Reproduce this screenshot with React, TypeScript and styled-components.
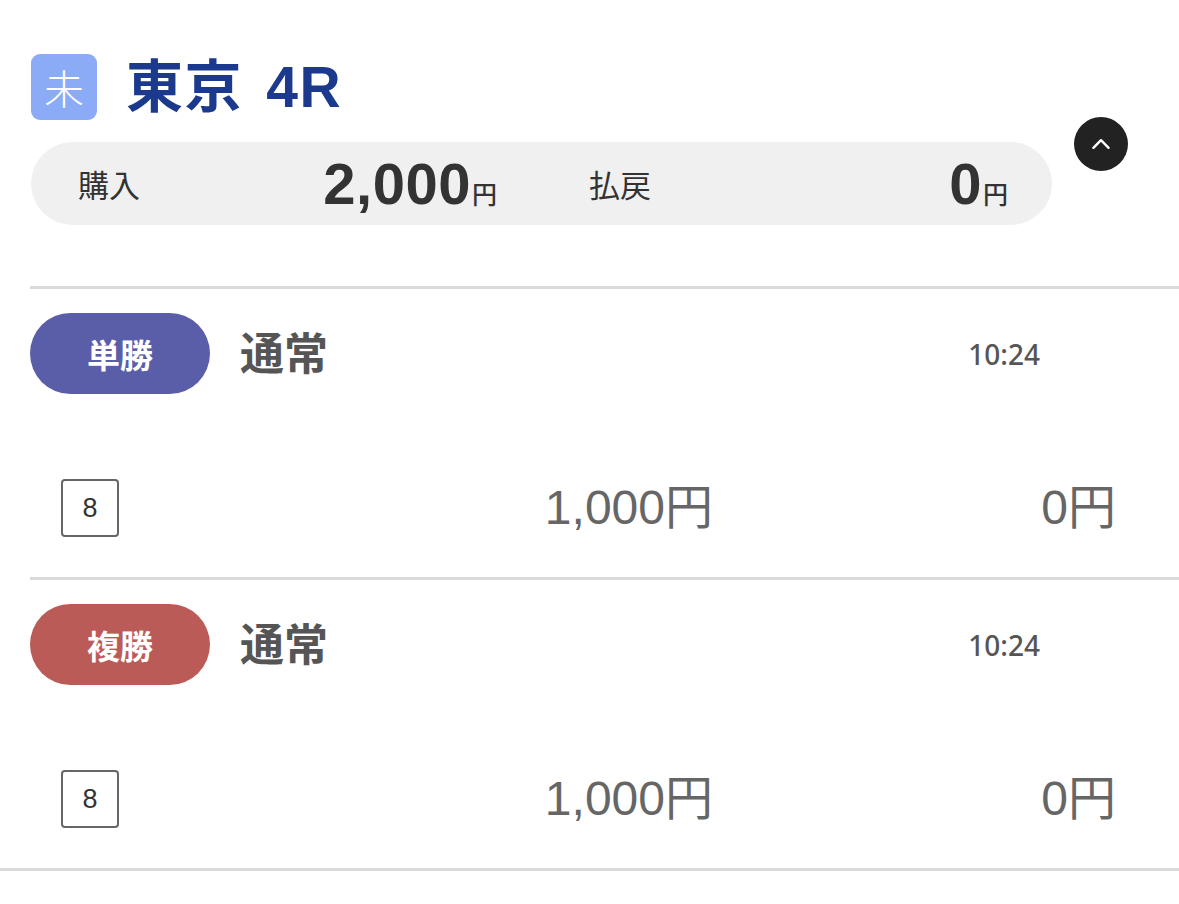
import styled, { createGlobalStyle } from "styled-components";

const GlobalStyle = createGlobalStyle`
  html, body {
    margin: 0;
    padding: 0;
    background: #fff;
  }
  body {
    font-family: "Liberation Sans", "Noto Sans CJK JP", sans-serif;
    color: #333;
  }
`;

type BetKind = "win" | "place";

interface Bet {
  id: number;
  kind: BetKind;
  label: string;
  method: string;
  time: string;
  horse: number;
  amount: string;
  payout: string;
}

const bets: Bet[] = [
  { id: 1, kind: "win", label: "単勝", method: "通常", time: "10:24", horse: 8, amount: "1,000", payout: "0" },
  { id: 2, kind: "place", label: "複勝", method: "通常", time: "10:24", horse: 8, amount: "1,000", payout: "0" },
];

const kindColor: Record<BetKind, string> = {
  win: "#5a5ea9",
  place: "#bb5b58",
};

const App = () => {
  return (
    <Page>
      <GlobalStyle />
      <Header>
        <TitleRow>
          <StatusBadge>未</StatusBadge>
          <Title>東京 4R</Title>
        </TitleRow>
        <Summary>
          <SummaryItem>
            <SummaryLabel>購入</SummaryLabel>
            <SummaryValue>
              2,000<small>円</small>
            </SummaryValue>
          </SummaryItem>
          <SummaryItem>
            <SummaryLabel>払戻</SummaryLabel>
            <SummaryValue>
              0<small>円</small>
            </SummaryValue>
          </SummaryItem>
        </Summary>
        <ToggleButton aria-label="collapse">
          <svg width="26" height="26" viewBox="0 0 24 24" fill="none">
            <path
              d="M5 15.5L12 8.5L19 15.5"
              stroke="#fff"
              strokeWidth="2.2"
              strokeLinecap="round"
              strokeLinejoin="round"
            />
          </svg>
        </ToggleButton>
      </Header>

      <BetList>
        {bets.map((bet) => (
          <BetBlock key={bet.id}>
            <BetHead>
              <KindPill $kind={bet.kind}>{bet.label}</KindPill>
              <Method>{bet.method}</Method>
              <Time>{bet.time}</Time>
            </BetHead>
            <BetLine>
              <HorseCell>
                <HorseNo>{bet.horse}</HorseNo>
              </HorseCell>
              <Money>{bet.amount}円</Money>
              <Money>{bet.payout}円</Money>
            </BetLine>
          </BetBlock>
        ))}
      </BetList>
    </Page>
  );
};

export default App;

const Page = styled.div`
  width: 1179px;
  min-height: 904px;
  background: #fff;
`;

const Header = styled.div`
  display: grid;
  grid-template-columns: 1021px 1fr;
  column-gap: 22px;
  row-gap: 22px;
  padding: 54px 0 0 31px;
`;

const TitleRow = styled.div`
  display: flex;
  align-items: center;
  gap: 29px;
  grid-column: 1;
`;

const StatusBadge = styled.div`
  width: 66px;
  height: 66px;
  border-radius: 9px;
  background: #8cabf7;
  color: #fff;
  display: flex;
  align-items: center;
  justify-content: center;
  font-family: "Noto Sans CJK JP", sans-serif;
  font-weight: 300;
  font-size: 40px;
`;

const Title = styled.h1`
  margin: 0;
  font-size: 57px;
  font-weight: 700;
  color: #1b3a8d;
  letter-spacing: 1.5px;
  word-spacing: 6px;
  line-height: 1;
`;

const Summary = styled.div`
  grid-column: 1;
  height: 83px;
  border-radius: 42px;
  background: #f0f0f0;
  display: grid;
  grid-template-columns: 1fr 1fr;
  column-gap: 92px;
  padding: 0 44px 0 47px;
  box-sizing: border-box;
  align-items: center;
`;

const SummaryItem = styled.div`
  display: flex;
  align-items: center;
  justify-content: space-between;
`;

const SummaryLabel = styled.span`
  font-family: "Noto Sans CJK JP", sans-serif;
  font-size: 31px;
  font-weight: 400;
  color: #333;
  line-height: 1;
`;

const SummaryValue = styled.span`
  font-size: 58px;
  font-weight: 700;
  color: #333;
  letter-spacing: 0.5px;
  line-height: 1;
  small {
    font-family: "Noto Sans CJK JP", sans-serif;
    font-size: 25px;
    font-weight: 500;
    margin-left: 1px;
    letter-spacing: 0;
  }
`;

const ToggleButton = styled.button`
  grid-column: 2;
  grid-row: 1 / span 2;
  align-self: center;
  margin-top: 8px;
  width: 54px;
  height: 54px;
  border-radius: 50%;
  border: none;
  background: #222;
  padding: 0;
  display: flex;
  align-items: center;
  justify-content: center;
  cursor: pointer;
`;

const BetList = styled.div`
  margin-top: 61px;
  border-bottom: 3px solid #d9d9d9;
`;

const BetBlock = styled.div`
  margin-left: 30px;
  border-top: 3px solid #d9d9d9;
  padding: 24px 0 40px;
`;

const BetHead = styled.div`
  display: flex;
  align-items: center;
  gap: 30px;
  height: 81px;
`;

const KindPill = styled.div<{ $kind: BetKind }>`
  width: 180px;
  height: 81px;
  border-radius: 41px;
  background: ${({ $kind }) => kindColor[$kind]};
  color: #fff;
  display: flex;
  align-items: center;
  justify-content: center;
  font-family: "Noto Sans CJK JP", sans-serif;
  font-weight: 700;
  font-size: 33px;
`;

const Method = styled.div`
  flex: 1;
  font-family: "Noto Sans CJK JP", sans-serif;
  font-weight: 700;
  font-size: 44px;
  color: #555;
  line-height: 1;
  margin-top: -6px;
`;

const Time = styled.div`
  margin-right: 139px;
  font-family: "Noto Sans", sans-serif;
  font-size: 28px;
  font-weight: 500;
  color: #555;
  line-height: 1;
`;

const BetLine = styled.div`
  display: grid;
  grid-template-columns: 89px 594px 403px;
  align-items: center;
  margin-top: 85px;
  height: 58px;
`;

const HorseCell = styled.div`
  padding-left: 31px;
`;

const HorseNo = styled.div`
  width: 58px;
  height: 58px;
  box-sizing: border-box;
  border: 2px solid #666;
  border-radius: 4px;
  display: flex;
  align-items: center;
  justify-content: center;
  font-size: 27px;
  color: #333;
`;

const Money = styled.div`
  text-align: right;
  font-size: 48px;
  color: #666;
  line-height: 1;
  white-space: nowrap;
`;
